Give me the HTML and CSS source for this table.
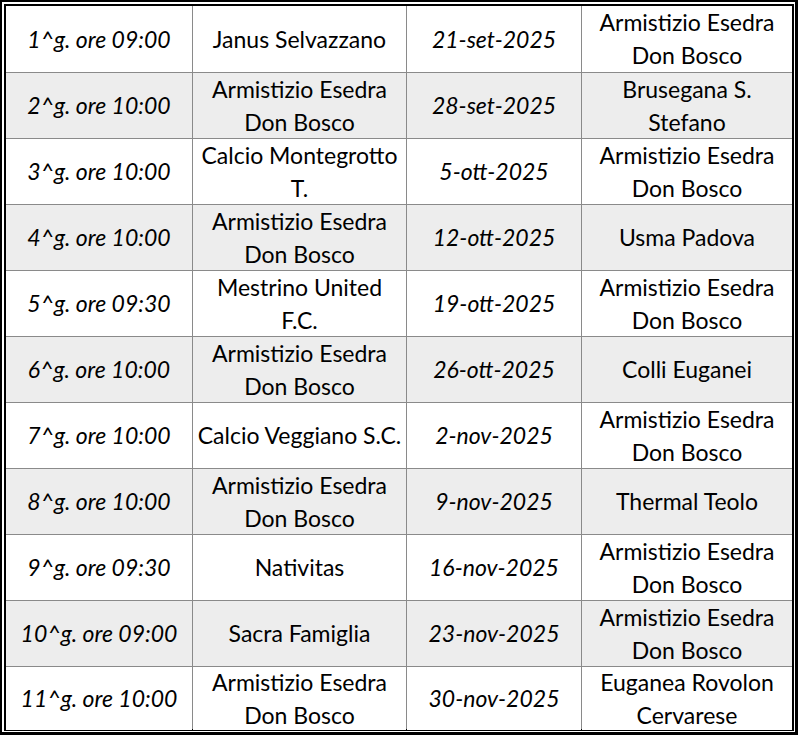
FILE: index.html
```html
<!DOCTYPE html>
<html lang="it">
<head>
<meta charset="utf-8">
<title>Calendario</title>
<link rel="stylesheet" href="styles.css">
</head>
<body>
<div class="frame">
  <div class="sheet">
    <div class="c odd it">1^g. ore 09:00</div>
    <div class="c odd">Janus Selvazzano</div>
    <div class="c odd it">21-set-2025</div>
    <div class="c odd">Armistizio Esedra<br>Don Bosco</div>

    <div class="c even it">2^g. ore 10:00</div>
    <div class="c even">Armistizio Esedra<br>Don Bosco</div>
    <div class="c even it">28-set-2025</div>
    <div class="c even">Brusegana S.<br>Stefano</div>

    <div class="c odd it">3^g. ore 10:00</div>
    <div class="c odd">Calcio Montegrotto<br>T.</div>
    <div class="c odd it">5-ott-2025</div>
    <div class="c odd">Armistizio Esedra<br>Don Bosco</div>

    <div class="c even it">4^g. ore 10:00</div>
    <div class="c even">Armistizio Esedra<br>Don Bosco</div>
    <div class="c even it">12-ott-2025</div>
    <div class="c even">Usma Padova</div>

    <div class="c odd it">5^g. ore 09:30</div>
    <div class="c odd">Mestrino United<br>F.C.</div>
    <div class="c odd it">19-ott-2025</div>
    <div class="c odd">Armistizio Esedra<br>Don Bosco</div>

    <div class="c even it">6^g. ore 10:00</div>
    <div class="c even">Armistizio Esedra<br>Don Bosco</div>
    <div class="c even it">26-ott-2025</div>
    <div class="c even">Colli Euganei</div>

    <div class="c odd it">7^g. ore 10:00</div>
    <div class="c odd">Calcio Veggiano S.C.</div>
    <div class="c odd it">2-nov-2025</div>
    <div class="c odd">Armistizio Esedra<br>Don Bosco</div>

    <div class="c even it">8^g. ore 10:00</div>
    <div class="c even">Armistizio Esedra<br>Don Bosco</div>
    <div class="c even it">9-nov-2025</div>
    <div class="c even">Thermal Teolo</div>

    <div class="c odd it">9^g. ore 09:30</div>
    <div class="c odd">Nativitas</div>
    <div class="c odd it">16-nov-2025</div>
    <div class="c odd">Armistizio Esedra<br>Don Bosco</div>

    <div class="c even it">10^g. ore 09:00</div>
    <div class="c even">Sacra Famiglia</div>
    <div class="c even it">23-nov-2025</div>
    <div class="c even">Armistizio Esedra<br>Don Bosco</div>

    <div class="c odd it">11^g. ore 10:00</div>
    <div class="c odd">Armistizio Esedra<br>Don Bosco</div>
    <div class="c odd it">30-nov-2025</div>
    <div class="c odd">Euganea Rovolon<br>Cervarese</div>
  </div>
</div>
</body>
</html>
```

FILE: styles.css
```css
html, body {
  margin: 0;
  padding: 0;
  background: #ffffff;
}

.frame {
  width: 798px;
  height: 735px;
  box-sizing: border-box;
  border: 2px solid #000;
  border-right-width: 3px;
  border-bottom-width: 3px;
  padding: 2px 1px 1px 2px;
  background: #ffffff;
}

.sheet {
  box-sizing: border-box;
  width: 790px;
  height: 727px;
  border: 2px solid #000;
  background: #8a8a8a;
  display: grid;
  grid-template-columns: 186px 213px 174px 210px;
  grid-template-rows: 66px repeat(9, 65px) 63px;
  gap: 1px;
}

.c {
  display: flex;
  align-items: center;
  justify-content: center;
  text-align: center;
  font-family: Lato, "Open Sans", sans-serif;
  font-size: 23px;
  line-height: 33px;
  color: #000;
  white-space: nowrap;
}

.it {
  font-style: italic;
}

.odd {
  background: #ffffff;
}

.even {
  background: #ededed;
}
```
